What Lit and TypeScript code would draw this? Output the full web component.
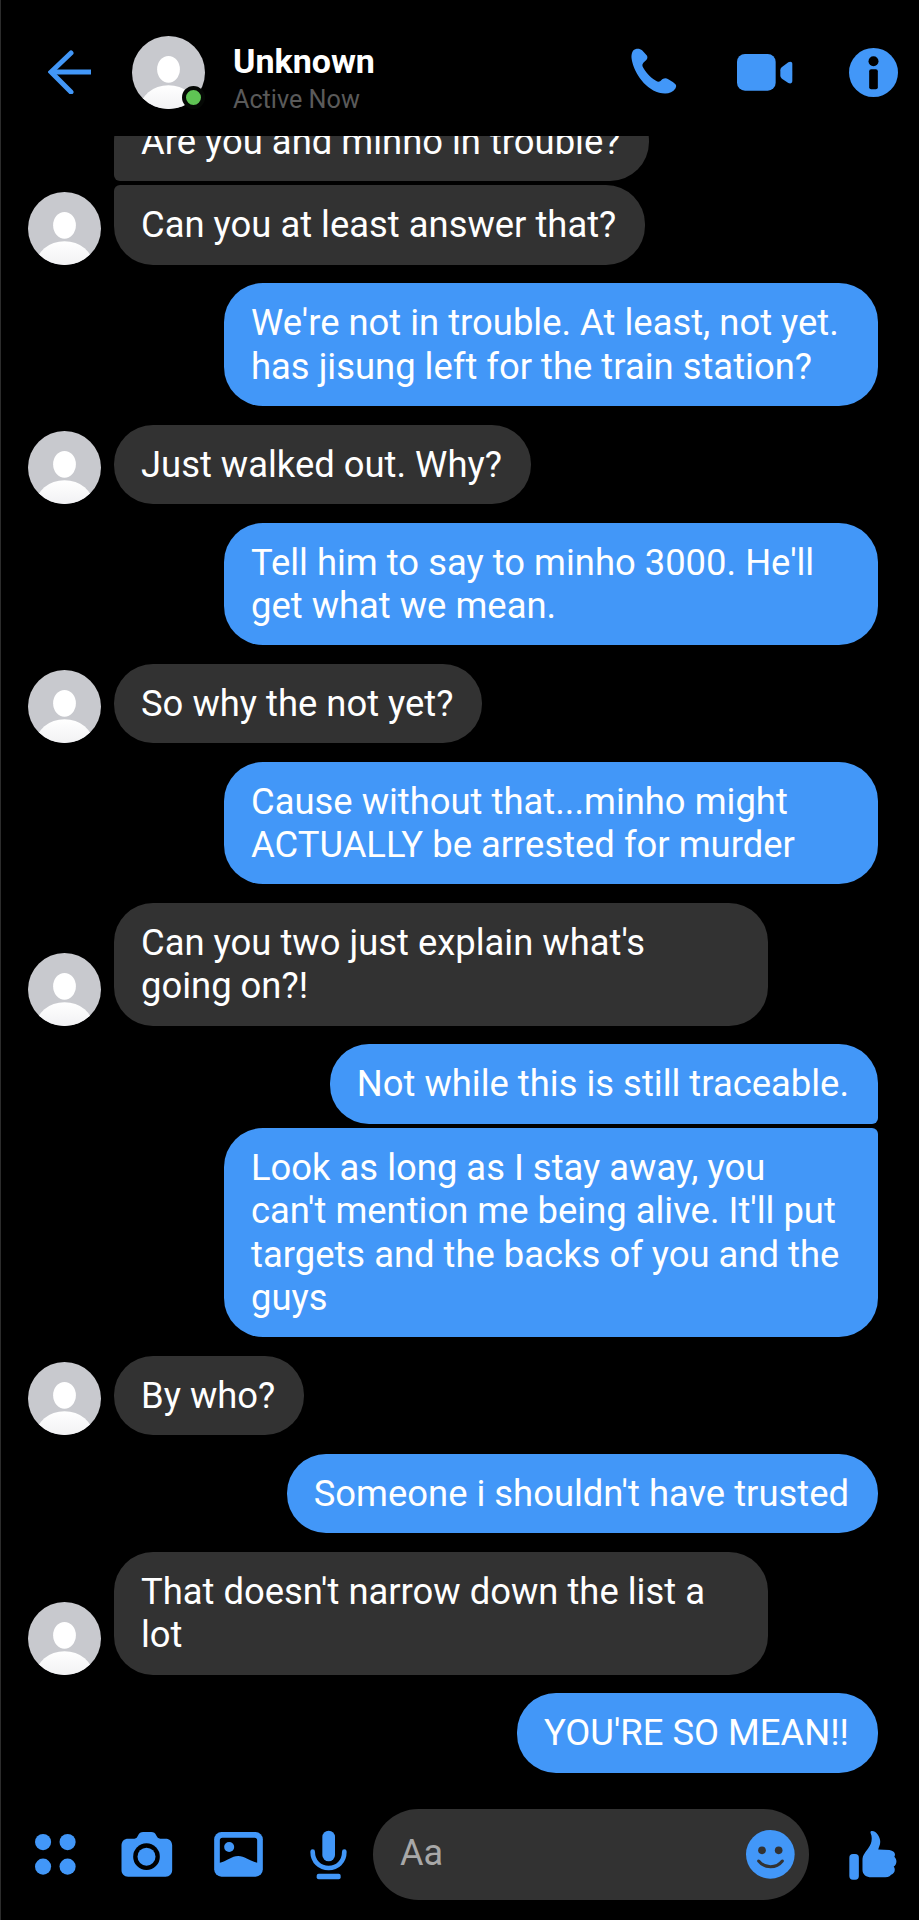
import { LitElement, html, css } from "lit";
import { customElement } from "lit/decorators.js";

const avatar = (size: number) => html`<svg class="avatar" width=${size} height=${size} viewBox="-109 -109 218 218" aria-hidden="true">
  <defs>
    <clipPath id="c${size}"><circle r="109"></circle></clipPath>
    <linearGradient id="g${size}" x1="0" x2="0" y1="0" y2="1"><stop offset="0" stop-color="#ffffff"></stop><stop offset="1" stop-color="#e4e4e8"></stop></linearGradient>
  </defs>
  <circle r="109" fill="#c8c9ce"></circle>
  <ellipse cx="0" cy="-9.5" rx="34" ry="40" fill="#fff"></ellipse>
  <ellipse cx="0" cy="110" rx="85" ry="72" fill="url(#g${size})" clip-path="url(#c${size})"></ellipse>
</svg>`;

type Msg = { side: "in" | "out"; text: string; shape?: string; avatar?: boolean; top?: boolean };

const messages: Msg[] = [
  { side: "in", text: "Are you and minho in trouble?", shape: "tail-bl", top: true },
  { side: "in", text: "Can you at least answer that?", shape: "tail-tl", avatar: true },
  { side: "out", text: "We're not in trouble. At least, not yet. has jisung left for the train station?" },
  { side: "in", text: "Just walked out. Why?", avatar: true },
  { side: "out", text: "Tell him to say to minho 3000. He'll get what we mean." },
  { side: "in", text: "So why the not yet?", avatar: true },
  { side: "out", text: "Cause without that...minho might ACTUALLY be arrested for murder" },
  { side: "in", text: "Can you two just explain what's going on?!", avatar: true },
  { side: "out", text: "Not while this is still traceable.", shape: "tail-br", top: true },
  { side: "out", text: "Look as long as I stay away, you can't mention me being alive. It'll put targets and the backs of you and the guys", shape: "tail-tr" },
  { side: "in", text: "By who?", avatar: true },
  { side: "out", text: "Someone i shouldn't have trusted" },
  { side: "in", text: "That doesn't narrow down the list a lot", avatar: true },
  { side: "out", text: "YOU'RE SO MEAN!!" },
];

@customElement("app-root")
export class AppRoot extends LitElement {
  static styles = css`
    :host {
      display: flex;
      flex-direction: column;
      width: 919px;
      height: 1920px;
      box-sizing: border-box;
      border-left: 1px solid #2c2c2c;
      background: #000;
      color: #fff;
      font-family: Roboto, "Liberation Sans", sans-serif;
      overflow: hidden;
    }
    svg { display: block; flex: none; }
    .header {
      flex: none;
      height: 136px;
      display: flex;
      align-items: center;
      padding: 8px 21px 0 47px;
      box-sizing: border-box;
      background: #000;
      position: relative;
      z-index: 1;
    }
    .back { margin-right: 40px; }
    .head-avatar { position: relative; flex: none; margin-right: 28px; }
    .dot {
      position: absolute;
      left: 50px;
      top: 50px;
      width: 15px;
      height: 15px;
      border-radius: 50%;
      background: #5fc454;
      border: 4px solid #050805;
    }
    .who { flex: 1; display: flex; flex-direction: column; gap: 5px; padding-top: 13px; }
    .name { font-size: 34px; font-weight: 700; line-height: 38px; }
    .status { font-size: 25.2px; line-height: 30px; color: #5a5a5a; }
    .actions { display: flex; align-items: center; }
    .phone { margin-right: 59px; }
    .video { margin-right: 56px; }

    .list {
      flex: 1;
      min-height: 0;
      overflow: hidden;
      display: flex;
      flex-direction: column;
      padding: 0 41px 0 27px;
    }
    .row { flex: none; display: flex; align-items: flex-end; margin-top: 18.7px; }
    .row.first { margin-top: -34.5px; }
    .row.tight { margin-top: 4.5px; }
    .row.out { justify-content: flex-end; }
    .slot { flex: none; width: 73px; margin-right: 13px; }
    .bubble {
      box-sizing: border-box;
      max-width: 654px;
      padding: 18px 29px 18px 27px;
      font-size: 36.4px;
      line-height: 43.3px;
      border-radius: 39px;
    }
    .in .bubble { background: #323232; }
    .out .bubble { background: #4297f8; }
    .tail-bl { border-bottom-left-radius: 6px; }
    .tail-tl { border-top-left-radius: 6px; }
    .tail-br { border-bottom-right-radius: 6px; }
    .tail-tr { border-top-right-radius: 6px; }

    .composer {
      flex: none;
      height: 111px;
      padding: 0 21px 20px 34px;
      box-sizing: border-box;
      display: flex;
      align-items: center;
    }
    .apps { margin-right: 45px; }
    .camera { margin-right: 41px; }
    .gallery { margin-right: 47px; }
    .mic { margin-right: 26px; }
    .input {
      flex: none;
      width: 436px;
      height: 91px;
      box-sizing: border-box;
      border-radius: 46px;
      background: #323232;
      display: flex;
      align-items: center;
      justify-content: space-between;
      padding: 0 14px 0 27px;
      margin-right: 40px;
    }
    .aa { font-size: 36px; color: #a8a8a8; position: relative; top: -2px; }
  `;

  render() {
    return html`
      <div class="header">
        <svg class="back" width="44" height="44" viewBox="0 0 44 44" fill="none" stroke="#4297f8" stroke-width="5" aria-hidden="true">
          <path d="M3 22H43"></path><path d="M23 3L3 22L23 42" stroke-linecap="round" stroke-linejoin="miter"></path>
        </svg>
        <div class="head-avatar">${avatar(73)}<span class="dot"></span></div>
        <div class="who"><div class="name">Unknown</div><div class="status">Active Now</div></div>
        <div class="actions">
          <svg class="phone" width="48" height="50" viewBox="510 146 148 150" fill="#4297f8" aria-hidden="true">
            <path d="M528 150C518 152 513 165 515 180C520 215 550 270 600 285C620 290 640 288 650 272C656 262 650 258 642 252L628 243C620 238 612 240 607 246C602 252 596 252 590 248C570 236 558 220 550 206C546 198 550 194 556 188C563 182 566 176 562 170L548 155C542 149 534 148 528 150Z"></path>
          </svg>
          <svg class="video" width="56" height="37" viewBox="832 163 168 111" fill="#4297f8" aria-hidden="true">
            <rect x="832" y="163" width="116" height="110" rx="24"></rect>
            <path d="M962 212C962 207 964 204 968 201L986 188C992 184 998 186 998 193V244C998 251 992 253 986 250L968 238C964 235 962 232 962 227Z"></path>
          </svg>
          <svg class="info" width="49" height="49" viewBox="-73.5 -73.5 147 147" aria-hidden="true">
            <circle r="73.5" fill="#4297f8"></circle>
            <circle cy="-34" r="15" fill="#000"></circle>
            <rect x="-13" y="-10" width="26" height="60" rx="6" fill="#000"></rect>
          </svg>
        </div>
      </div>

      <div class="list">
        ${messages.map((m, i) => html`
          <div class="row ${m.side} ${i === 0 ? "first" : ""} ${messages[i - 1]?.top ? "tight" : ""}">
            ${m.side === "in" ? html`<div class="slot">${m.avatar ? avatar(73) : ""}</div>` : ""}
            <div class="bubble ${m.shape ?? ""}">${m.text}</div>
          </div>`)}
      </div>

      <div class="composer">
        <svg class="apps" width="41" height="41" viewBox="105 164 122 122" fill="#4297f8" aria-hidden="true">
          <circle cx="129" cy="188" r="24"></circle><circle cx="202" cy="188" r="24"></circle>
          <circle cx="129" cy="261" r="24"></circle><circle cx="202" cy="261" r="24"></circle>
        </svg>
        <svg class="camera" width="52" height="45" viewBox="363 158 153 135" aria-hidden="true">
          <path fill="#4297f8" d="M383 178H402C408 178 410 174 413 168C416 161 421 158 428 158H452C460 158 464 161 467 168C470 174 473 178 479 178H495C507 178 515 186 515 198V272C515 284 507 292 495 292H383C371 292 363 284 363 272V198C363 186 371 178 383 178Z"></path>
          <circle cx="438" cy="232" r="40" fill="#000"></circle>
          <circle cx="438" cy="232" r="27" fill="#4297f8"></circle>
        </svg>
        <svg class="gallery" width="49" height="45" viewBox="640 158 146 135" aria-hidden="true">
          <rect x="640" y="158" width="146" height="134" rx="22" fill="#4297f8"></rect>
          <path fill="#000" d="M665 175H761Q769 175 769 183V250C745 245 732 230 712 230C692 230 680 245 657 250V183Q657 175 665 175Z"></path>
          <circle cx="685" cy="203" r="15" fill="#4297f8"></circle>
        </svg>
        <svg class="mic" width="37" height="50" viewBox="930 150 111 150" aria-hidden="true">
          <rect x="967" y="152" width="38" height="92" rx="19" fill="#4297f8"></rect>
          <path d="M938 215C938 245 960 264 986 264C1012 264 1033 245 1033 215" fill="none" stroke="#4297f8" stroke-width="14" stroke-linecap="round"></path>
          <rect x="950" y="281" width="72" height="17" rx="6" fill="#4297f8"></rect>
        </svg>
        <div class="input">
          <span class="aa">Aa</span>
          <svg width="49" height="49" viewBox="859 152 147 147" aria-hidden="true">
            <circle cx="932" cy="225" r="73" fill="#4297f8"></circle>
            <circle cx="907" cy="213" r="11.5" fill="#323232"></circle>
            <circle cx="957" cy="213" r="11.5" fill="#323232"></circle>
            <path d="M897 245C915 268 950 268 968 245" fill="none" stroke="#323232" stroke-width="9" stroke-linecap="round"></path>
          </svg>
        </div>
        <svg width="48" height="50" viewBox="1167 150 146 150" fill="#4297f8" aria-hidden="true">
          <rect x="1168" y="222" width="29" height="78" rx="11"></rect>
          <path d="M1235 152C1250 150 1262 170 1262 185C1262 195 1258 200 1256 208L1290 210C1305 212 1310 222 1305 230C1315 240 1312 255 1303 260C1310 270 1305 282 1295 285C1290 292 1280 293 1270 293L1235 293C1220 293 1208 285 1208 270V240C1208 225 1218 215 1225 205C1235 192 1238 180 1235 165C1233 158 1230 154 1235 152Z"></path>
        </svg>
      </div>
    `;
  }
}
